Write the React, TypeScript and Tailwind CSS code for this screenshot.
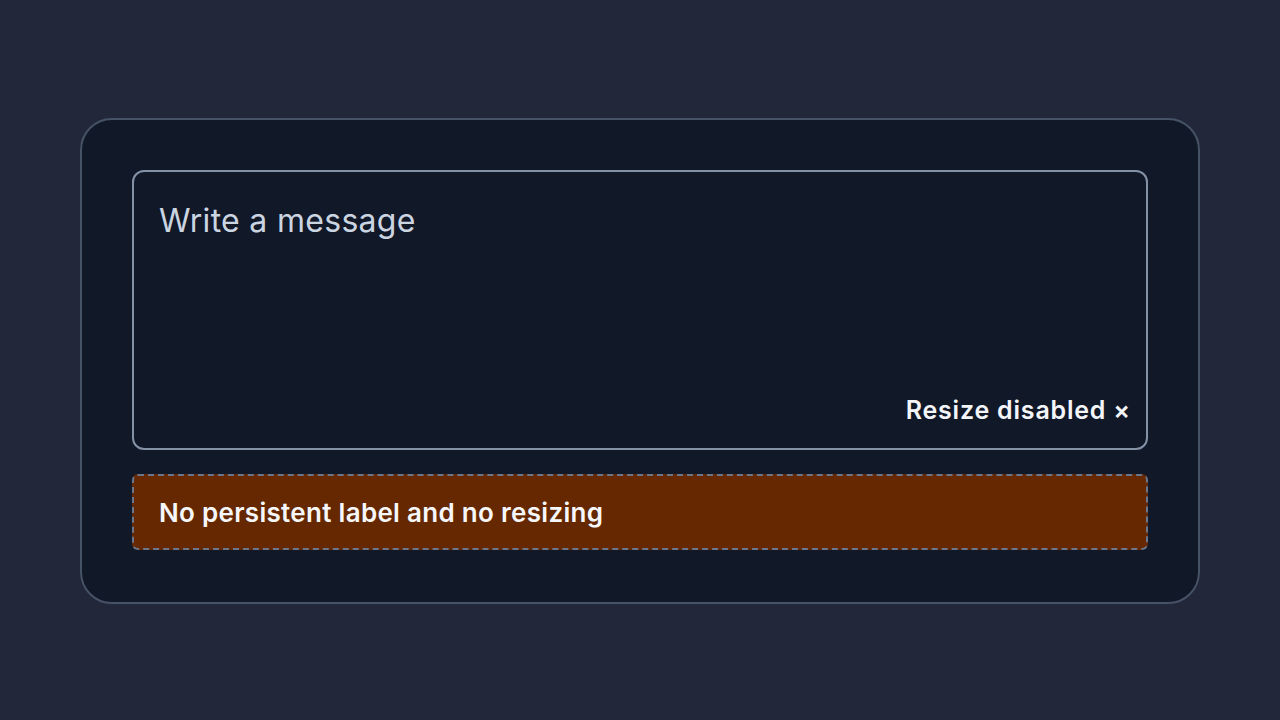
import React from 'react';

const App: React.FC = () => {
  return (
    <div className="min-h-screen w-full bg-[#222739] px-20 pt-[118px] font-['Inter','Liberation_Sans',sans-serif]">
      <div className="rounded-[32px] border-2 border-[#465367] bg-[#111827] px-[50px] pt-[50px] pb-[52px]">
        {/* textarea */}
        <div className="relative">
          <textarea
            placeholder="Write a message"
            className="block h-[280px] w-full resize-none rounded-xl border-2 border-[#8492a7] bg-transparent px-[25px] pt-[29px] pb-[20px] text-[32px] leading-[40px] tracking-[0.3px] text-white outline-none placeholder:text-[#cbd5e1]"
          />
          <span className="pointer-events-none absolute right-[17px] bottom-[21px] text-[25px] font-semibold tracking-[0.8px] text-[#f3f5f9]">
            Resize disabled ×
          </span>
        </div>

        {/* note */}
        <div className="mt-[24px] flex h-[76px] items-center rounded-md border-2 border-dashed border-[#6b768a] bg-[#652800] px-[25px]">
          <p className="text-[26px] font-semibold tracking-[0.3px] text-[#f6f7fa]">No persistent label and no resizing</p>
        </div>
      </div>
    </div>
  );
};

export default App;
